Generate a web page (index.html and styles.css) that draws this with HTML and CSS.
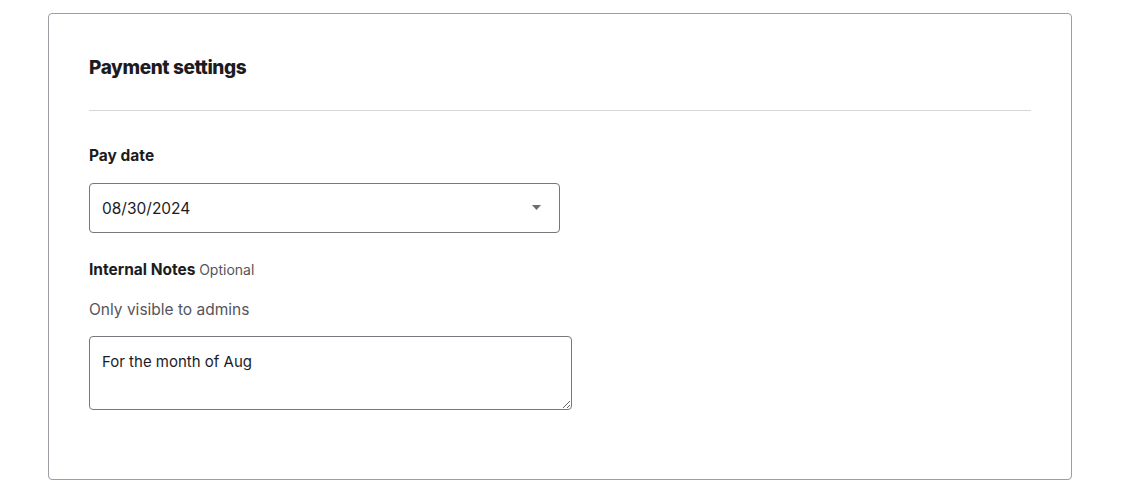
FILE: index.html
```html
<!DOCTYPE html>
<html lang="en">

<head>
    <meta charset="UTF-8">
    <meta name="viewport" content="width=device-width, initial-scale=1.0">
    <title>Payment settings</title>
    <link rel="stylesheet" href="styles.css">
</head>

<body>
    <main>
        <section class="card">
            <h2 class="card-title">Payment settings</h2>
            <hr class="divider">

            <div class="field">
                <label for="pay-date" class="field-label">Pay date</label>
                <div class="select-wrap">
                    <select id="pay-date" class="select">
                        <option>08/30/2024</option>
                    </select>
                    <svg class="caret" width="9" height="5" viewBox="0 0 9 5">
                        <path d="M0 0h9L4.5 5z" fill="#6b6b73" />
                    </svg>
                </div>
            </div>

            <div class="field">
                <label for="notes" class="field-label">Internal Notes <span class="optional">Optional</span></label>
                <p class="hint">Only visible to admins</p>
                <textarea id="notes" class="textarea">For the month of Aug</textarea>
            </div>
        </section>
    </main>
</body>

</html>
```

FILE: styles.css
```css
body {
    font-family: Inter, "Noto Sans", sans-serif;
    margin: 0;
    padding: 0;
    background-color: #fff;
    color: #1c1c1f;
}

main {
    padding: 13px 51px 14px 48px;
}

.card {
    border: 1px solid #9d9da4;
    border-radius: 4px;
    padding: 40px 40px 69px;
}

.card-title {
    margin: 0;
    font-size: 19px;
    line-height: 28px;
    font-weight: 800;
    letter-spacing: -0.4px;
}

.divider {
    border: none;
    border-top: 1px solid #d6d6da;
    margin: 28px 0 32px;
}

.field {
    display: flex;
    flex-direction: column;
    align-items: flex-start;
}

.field + .field {
    margin-top: 24px;
}

.field-label {
    padding-top: 1px;
    font-size: 15.5px;
    line-height: 24px;
    font-weight: 700;
    letter-spacing: 0;
    margin-bottom: 15px;
}

.optional {
    font-size: 14px;
    font-weight: 400;
    color: #55555c;
}

.hint {
    margin: 0 0 14px;
    padding-top: 1px;
    font-size: 15.5px;
    line-height: 24px;
    color: #55555c;
}

.select-wrap {
    position: relative;
    width: 471px;
}

.select {
    width: 100%;
    height: 50px;
    box-sizing: border-box;
    padding: 0 40px 0 12px;
    border: 1px solid #77777e;
    border-radius: 4px;
    background-color: #fff;
    font-family: inherit;
    font-size: 15.5px;
    color: #1c1c1f;
    appearance: none;
}

.caret {
    position: absolute;
    right: 19px;
    top: 22px;
    pointer-events: none;
}

.textarea {
    width: 483px;
    height: 74px;
    box-sizing: border-box;
    padding: 14px 12px;
    border: 1px solid #77777e;
    border-radius: 4px;
    font-family: inherit;
    font-size: 15px;
    line-height: 22px;
    color: #1c1c1f;
}
```
